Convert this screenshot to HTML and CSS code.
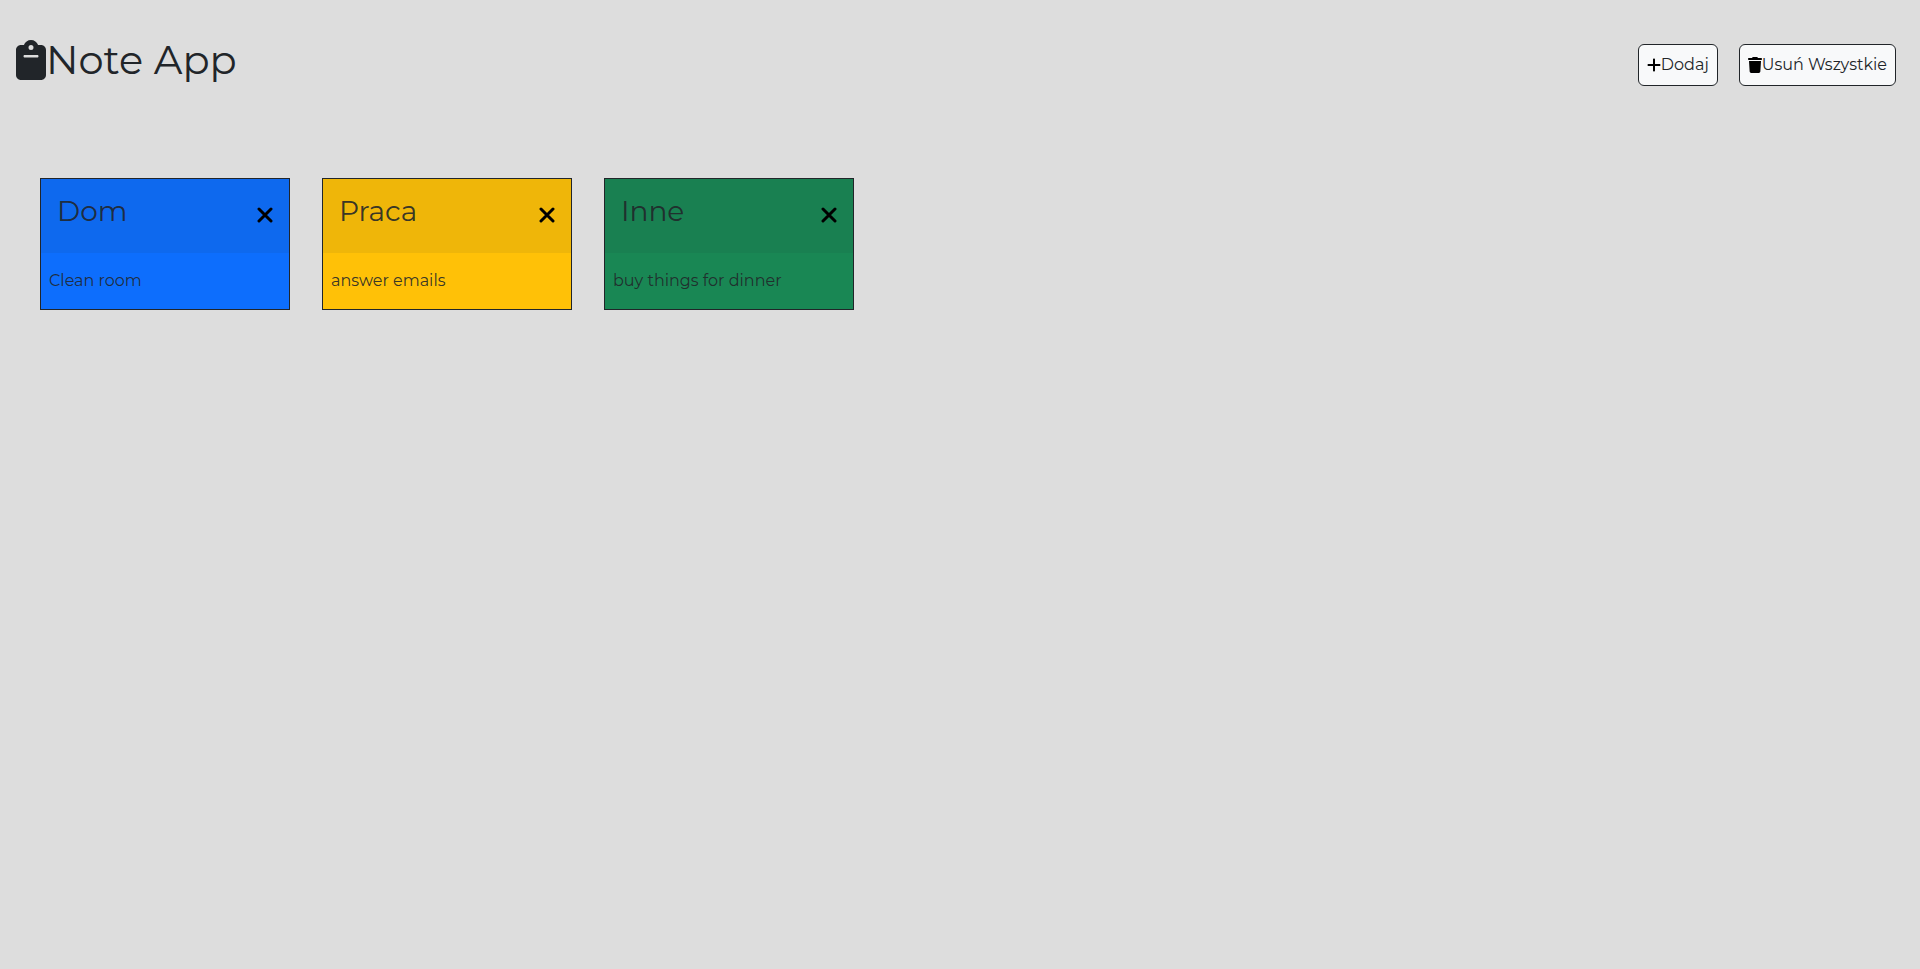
FILE: index.html
```html
<!DOCTYPE html>
<html lang="pl">
<head>
<meta charset="utf-8">
<meta name="viewport" content="width=device-width, initial-scale=1">
<title>Note App</title>
<link rel="stylesheet" href="styles.css">
</head>
<body>
<header class="topbar">
  <h1 class="brand">
    <svg class="brand-icon" viewBox="0 0 384 512" aria-hidden="true"><path fill-rule="evenodd" d="M192 0c-41.800 0-77.400 26.700-90.500 64H64C28.700 64 0 92.700 0 128v320c0 35.300 28.700 64 64 64h256c35.300 0 64-28.700 64-64V128c0-35.300-28.700-64-64-64h-37.500C269.400 26.700 233.800 0 192 0zm0 64a32 32 0 1 1 0 64 32 32 0 1 1 0-64zM112 192h160c8.800 0 16 7.200 16 16s-7.200 16-16 16H112c-8.800 0-16-7.200-16-16s7.200-16 16-16z"/></svg>
    <span>Note App</span>
  </h1>
  <div class="actions">
    <button class="btn" type="button">
      <svg class="btn-icon" viewBox="0 0 448 512" aria-hidden="true"><path d="M256 80c0-17.700-14.300-32-32-32s-32 14.300-32 32v144H48c-17.700 0-32 14.300-32 32s14.300 32 32 32h144v144c0 17.700 14.300 32 32 32s32-14.300 32-32V288h144c17.700 0 32-14.300 32-32s-14.300-32-32-32H256V80z"/></svg>
      <span>Dodaj</span>
    </button>
    <button class="btn" type="button">
      <svg class="btn-icon" viewBox="0 0 448 512" aria-hidden="true"><path d="M135.200 17.700C140.600 6.800 151.700 0 163.800 0h120.400c12.100 0 23.200 6.800 28.600 17.700L320 32h96c17.700 0 32 14.300 32 32s-14.300 32-32 32H32C14.300 96 0 81.700 0 64s14.300-32 32-32h96l7.200-14.300zM32 128h384l-21.200 339c-1.600 25.300-22.600 45-47.900 45H101.100c-25.300 0-46.300-19.700-47.900-45L32 128z"/></svg>
      <span>Usuń Wszystkie</span>
    </button>
  </div>
</header>
<main class="notes">
  <article class="note note-blue">
    <div class="note-head">
      <h2 class="note-title">Dom</h2>
      <button class="close" type="button" aria-label="Usuń"><svg class="close-icon" viewBox="0 0 16 16" aria-hidden="true"><path d="M2 2l12 12M14 2L2 14"/></svg></button>
    </div>
    <p class="note-body">Clean room</p>
  </article>
  <article class="note note-yellow">
    <div class="note-head">
      <h2 class="note-title">Praca</h2>
      <button class="close" type="button" aria-label="Usuń"><svg class="close-icon" viewBox="0 0 16 16" aria-hidden="true"><path d="M2 2l12 12M14 2L2 14"/></svg></button>
    </div>
    <p class="note-body">answer emails</p>
  </article>
  <article class="note note-green">
    <div class="note-head">
      <h2 class="note-title">Inne</h2>
      <button class="close" type="button" aria-label="Usuń"><svg class="close-icon" viewBox="0 0 16 16" aria-hidden="true"><path d="M2 2l12 12M14 2L2 14"/></svg></button>
    </div>
    <p class="note-body">buy things for dinner</p>
  </article>
</main>
</body>
</html>
```
FILE: styles.css
```css
* {
  box-sizing: border-box;
  margin: 0;
}

body {
  min-height: 100vh;
  background: #ddd;
  color: #212529;
  font-family: Montserrat, Inter, sans-serif;
  font-size: 16px;
  font-weight: 400;
  line-height: 24px;
}

.topbar {
  display: flex;
  align-items: center;
  justify-content: space-between;
  padding: 34px 24px 36px 16px;
}

.brand {
  display: flex;
  align-items: center;
  font-size: 40px;
  font-weight: 400;
  line-height: 48px;
}

.brand-icon {
  width: 30px;
  height: 40px;
  fill: #212529;
}

.actions {
  display: flex;
  gap: 21px;
  padding-top: 10px;
}

.btn {
  display: flex;
  align-items: center;
  padding: 8px;
  border: 1px solid #212529;
  border-radius: 6px;
  background: #f8f9fa;
  color: #212529;
  font: inherit;
}

.btn-icon {
  width: 14px;
  height: 16px;
  fill: #000;
}

.notes {
  display: flex;
  flex-wrap: wrap;
  gap: 32px;
  padding: 56px 40px;
}

.note {
  width: 250px;
  border: 1px solid #212529;
}

.note-head {
  display: flex;
  align-items: flex-start;
  justify-content: space-between;
  padding: 16px 16px 26px;
  background: rgba(33, 37, 41, 0.07);
}

.note-title {
  font-size: 28px;
  font-weight: 400;
  line-height: 32px;
}

.note-title,
.note-body {
  color: rgba(33, 37, 41, 0.9);
}

.close {
  display: flex;
  margin-top: 12px;
  padding: 0;
  border: 0;
  background: none;
}

.close-icon {
  width: 16px;
  height: 16px;
  fill: none;
  stroke: #000;
  stroke-width: 3;
  stroke-linecap: round;
}

.note-body {
  padding: 16px 8px;
}

.note-blue {
  background: #0d6efd;
}

.note-yellow {
  background: #ffc107;
}

.note-green {
  background: #198754;
}
```
